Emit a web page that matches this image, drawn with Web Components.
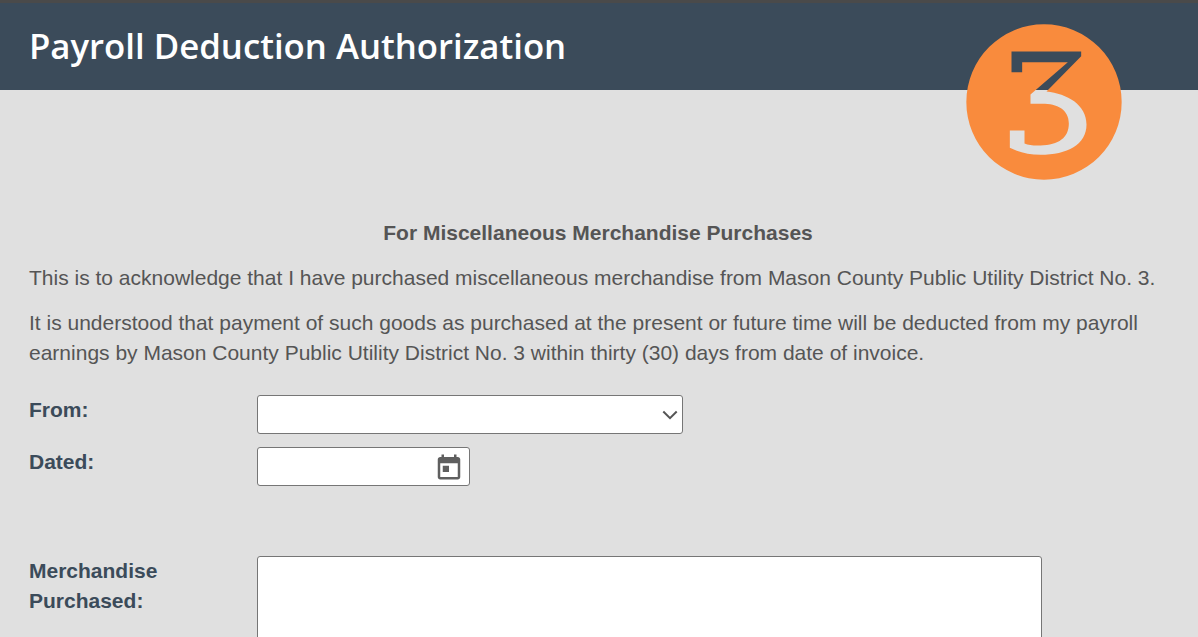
<!DOCTYPE html>
<html lang="en">
<head>
<meta charset="utf-8">
<title>Payroll Deduction Authorization</title>
<style>
  html, body { margin: 0; height: 637px; overflow: hidden; }
  body {
    background: #e0e0e0;
    color: #555;
    font: 21px/30px "Liberation Sans", Arial, sans-serif;
  }
</style>
</head>
<body>
<pud-header>Payroll Deduction Authorization</pud-header>
<pud-form>
  <pud-subtitle>For Miscellaneous Merchandise Purchases</pud-subtitle>
  <pud-para>This is to acknowledge that I have purchased miscellaneous merchandise from Mason County Public Utility District No. 3.</pud-para>
  <pud-para>It is understood that payment of such goods as purchased at the present or future time will be deducted from my payroll earnings by Mason County Public Utility District No. 3 within thirty (30) days from date of invoice.</pud-para>
  <pud-field label="From:" style="margin-top: 27px"><pud-select></pud-select></pud-field>
  <pud-field label="Dated:" style="margin-top: 13px"><pud-date></pud-date></pud-field>
  <pud-field label="Merchandise Purchased:" style="margin-top: 70px"><pud-textarea></pud-textarea></pud-field>
</pud-form>

<script>
class PudHeader extends HTMLElement {
  constructor() {
    super();
    this.attachShadow({ mode: 'open' });
    this.shadowRoot.innerHTML = `
      <style>
        :host {
          display: flex;
          align-items: center;
          position: relative;
          height: 87px;
          box-sizing: content-box;
          padding: 0 29px;
          border-top: 3px solid #4a4a4a;
          background: #3b4b5a;
        }
        h1 {
          margin: -2px 0 0;
          color: #fff;
          font: 600 34.75px/44px "Open Sans", sans-serif;
        }
        svg {
          position: absolute;
          left: 965.5px;
          top: 21px;
        }
      </style>
      <h1><slot></slot></h1>
      <svg width="156" height="156" viewBox="46.5 73.5 468 468" aria-hidden="true">
        <path fill="#f98b3d" fill-rule="evenodd" d="M47.5 307.5a233 233 0 1 0 466 0a233 233 0 1 0-466 0Z
          M183 156H392V170L288 276C350 283 408 315 408 375C408 435 350 466 270 466C235 466 205 458 178 445V393H222V432C235 437 250 439 270 438C325 436 355 415 355 372C355 330 320 313 275 313H240V285L352 188H215V218H183Z"/>
      </svg>
    `;
  }
}
customElements.define('pud-header', PudHeader);

class PudForm extends HTMLElement {
  constructor() {
    super();
    this.attachShadow({ mode: 'open' });
    this.shadowRoot.innerHTML = `
      <style>
        :host {
          display: block;
          padding: 128px 29px 0;
        }
      </style>
      <slot></slot>
    `;
  }
}
customElements.define('pud-form', PudForm);

class PudSubtitle extends HTMLElement {
  constructor() {
    super();
    this.attachShadow({ mode: 'open' });
    this.shadowRoot.innerHTML = `
      <style>
        :host { display: block; text-align: center; font-weight: bold; margin-bottom: 15px; padding-right: 2px; }
      </style>
      <slot></slot>
    `;
  }
}
customElements.define('pud-subtitle', PudSubtitle);

class PudPara extends HTMLElement {
  constructor() {
    super();
    this.attachShadow({ mode: 'open' });
    this.shadowRoot.innerHTML = `
      <style>
        :host { display: block; margin-bottom: 15px; }
      </style>
      <slot></slot>
    `;
  }
}
customElements.define('pud-para', PudPara);

class PudField extends HTMLElement {
  constructor() {
    super();
    this.attachShadow({ mode: 'open' });
    this.shadowRoot.innerHTML = `
      <style>
        :host {
          display: grid;
          grid-template-columns: 228px 1fr;
          align-items: start;
        }
        label { color: #3b4b5a; font-weight: bold; }
      </style>
      <label>${this.getAttribute('label')}</label>
      <slot></slot>
    `;
  }
}
customElements.define('pud-field', PudField);

const controlStyle = `
  :host { display: block; position: relative; box-sizing: border-box; }
  .box {
    display: block;
    width: 100%;
    height: 100%;
    box-sizing: border-box;
    margin: 0;
    background: #fff;
    border: 1px solid #767676;
    border-radius: 3px;
    font: inherit;
    outline: none;
  }
  svg { position: absolute; pointer-events: none; }
`;

class PudSelect extends HTMLElement {
  constructor() {
    super();
    this.attachShadow({ mode: 'open' });
    this.shadowRoot.innerHTML = `
      <style>
        ${controlStyle}
        :host { width: 426px; height: 39px; }
        select { appearance: none; }
        svg { right: 5px; top: 15px; }
      </style>
      <select class="box" aria-label="From"><option></option></select>
      <svg width="16" height="10" viewBox="0 0 16 10"><path d="M1.3 1.5l6.7 6.7 6.7-6.7" fill="none" stroke="#555" stroke-width="2"/></svg>
    `;
  }
}
customElements.define('pud-select', PudSelect);

class PudDate extends HTMLElement {
  constructor() {
    super();
    this.attachShadow({ mode: 'open' });
    this.shadowRoot.innerHTML = `
      <style>
        ${controlStyle}
        :host { width: 213px; height: 39px; }
        svg { left: 177px; top: 5px; }
      </style>
      <input class="box" type="text" aria-label="Dated">
      <svg width="30" height="30" viewBox="0 0 24 24"><path fill="#5f5f5f" d="M19 4h-1V2h-2v2H8V2H6v2H5c-1.1 0-2 .9-2 2v14c0 1.1.9 2 2 2h14c1.1 0 2-.9 2-2V6c0-1.1-.9-2-2-2zm0 16H5V9h14v11zM7 11h5v5H7z"/></svg>
    `;
  }
}
customElements.define('pud-date', PudDate);

class PudTextarea extends HTMLElement {
  constructor() {
    super();
    this.attachShadow({ mode: 'open' });
    this.shadowRoot.innerHTML = `
      <style>
        ${controlStyle}
        :host { width: 785px; height: 140px; }
        textarea { resize: none; }
      </style>
      <textarea class="box" aria-label="Merchandise Purchased"></textarea>
    `;
  }
}
customElements.define('pud-textarea', PudTextarea);
</script>
</body>
</html>
